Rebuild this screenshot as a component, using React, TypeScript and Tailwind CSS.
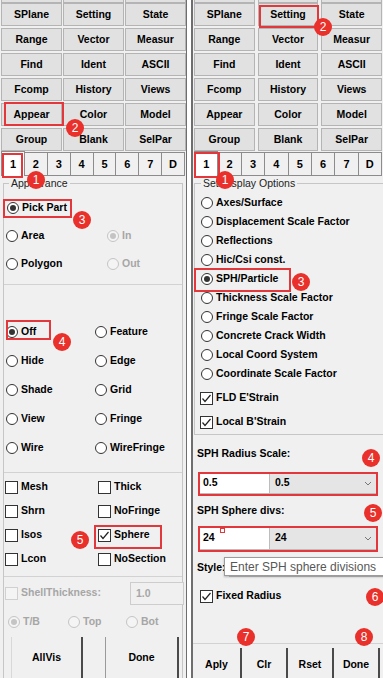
import React from 'react';

const ink = 'text-black';

const Radio: React.FC<{ checked?: boolean; disabled?: boolean; label: string; className?: string }> = ({
  checked,
  disabled,
  label,
  className = '',
}) => (
  <div className={`flex items-center gap-[3px] ${className}`}>
    <span
      className={`w-[12px] h-[12px] rounded-full border flex items-center justify-center shrink-0 ${
        disabled ? 'border-[#c4c4c4] bg-[#f4f4f4]' : 'border-[#333] bg-white'
      }`}
    >
      {checked && <span className={`w-[6px] h-[6px] rounded-full ${disabled ? 'bg-[#c4c4c4]' : 'bg-[#333]'}`} />}
    </span>
    <span className={`font-bold text-[10.5px] whitespace-nowrap ${disabled ? 'text-[#a6a6a6]' : ink}`}>{label}</span>
  </div>
);

const Check: React.FC<{ checked?: boolean; disabled?: boolean; label: string; className?: string }> = ({
  checked,
  disabled,
  label,
  className = '',
}) => (
  <div className={`flex items-center gap-[3px] ${className}`}>
    <span
      className={`w-[13px] h-[13px] border flex items-center justify-center shrink-0 ${
        disabled ? 'border-[#d0d0d0] bg-[#f4f4f4]' : 'border-[#333] bg-white'
      }`}
    >
      {checked && (
        <svg width="11" height="11" viewBox="0 0 11 11">
          <polyline points="1.5,5.5 4,8.5 9.5,2" fill="none" stroke="#222" strokeWidth="1.2" />
        </svg>
      )}
    </span>
    <span className={`font-bold text-[10.5px] whitespace-nowrap ${disabled ? 'text-[#a6a6a6]' : ink}`}>{label}</span>
  </div>
);

const GridBtn: React.FC<{ label: string }> = ({ label }) => (
  <div className="h-[23px] bg-[#e1e1e1] border border-[#b4b4b4] flex items-center justify-center font-bold text-[10.5px] text-black">
    {label}
  </div>
);

const buttonRows = [
  ['SPlane', 'Setting', 'State'],
  ['Range', 'Vector', 'Measur'],
  ['Find', 'Ident', 'ASCII'],
  ['Fcomp', 'History', 'Views'],
  ['Appear', 'Color', 'Model'],
  ['Group', 'Blank', 'SelPar'],
];

const ButtonGrid: React.FC<{ right?: boolean }> = ({ right }) => (
  <div className={right ? 'px-[1px]' : 'pl-[1px]'}>
    <div className={`grid grid-cols-3 h-[3px] ${right ? 'gap-x-[3px]' : 'gap-x-[1px]'}`}>
      <div className="bg-[#e1e1e1] border-b border-x border-[#b4b4b4]" />
      <div className="bg-[#e1e1e1] border-b border-x border-[#b4b4b4]" />
      <div className="bg-[#e1e1e1] border-b border-x border-[#b4b4b4]" />
    </div>
    <div className={`grid grid-cols-3 gap-y-[2px] ${right ? 'gap-x-[3px]' : 'gap-x-[1px]'}`}>
      {buttonRows.flat().map((b) => (
        <GridBtn key={b} label={b} />
      ))}
    </div>
  </div>
);

const Tabs: React.FC = () => (
  <div className="flex h-[24px] mt-[1px] px-[1px]">
    {['1', '2', '3', '4', '5', '6', '7', 'D'].map((t, i) => (
      <div
        key={t}
        className={`flex-1 flex items-center justify-center font-bold text-[11px] text-black border border-[#8c8c8c] ${
          i === 0 ? 'bg-white -mt-[1px] border-b-0' : 'bg-[#f0f0f0] -ml-[1px]'
        }`}
      >
        {t}
      </div>
    ))}
  </div>
);

const Badge: React.FC<{ n: string; className: string }> = ({ n, className }) => (
  <div
    className={`absolute w-[18px] h-[18px] rounded-full bg-[#e9302a] text-white text-[12px] flex items-center justify-center ${className}`}
  >
    {n}
  </div>
);

const Mark: React.FC<{ className: string }> = ({ className }) => (
  <div className={`absolute border-2 border-[#e2383c] ${className}`} />
);

const Chevron = () => (
  <svg width="8" height="5" viewBox="0 0 8 5" className="ml-auto mr-[4px]">
    <polyline points="1,1 4,4 7,1" fill="none" stroke="#777" strokeWidth="1" />
  </svg>
);

const LeftPanel: React.FC = () => (
  <div className="w-[187px] h-full bg-[#f0f0f0] border-r border-[#6e6e6e] flex flex-col">
    <ButtonGrid />
    <Tabs />
    <div className="relative mt-[7px] mx-[3px] border-t border-x border-[#c6c6c6] flex-1 flex flex-col">
      <span className="absolute -top-[8px] left-[5px] px-[2px] bg-[#f0f0f0] text-[10.5px] text-[#222]">Appearance</span>
      <div className="pt-[10px] pl-[3px]">
        <div className="h-[28px] flex items-center">
          <Radio checked label="Pick Part" />
        </div>
        <div className="h-[28px] flex items-center">
          <Radio label="Area" className="w-[101px] -ml-[1px]" />
          <Radio disabled checked label="In" />
        </div>
        <div className="h-[28px] flex items-center">
          <Radio label="Polygon" className="w-[101px] -ml-[1px]" />
          <Radio disabled label="Out" />
        </div>
      </div>
      <div className="mt-[6px] border-t border-[#d2d2d2]" />
      <div className="pt-[32px] pl-[2px]">
        {[
          ['Off', 'Feature'],
          ['Hide', 'Edge'],
          ['Shade', 'Grid'],
          ['View', 'Fringe'],
          ['Wire', 'WireFringe'],
        ].map(([a, b], i) => (
          <div key={a} className="h-[29px] flex items-center">
            <Radio checked={i === 0} label={a} className="w-[89px]" />
            <Radio label={b} />
          </div>
        ))}
      </div>
      <div className="mt-[10px] border-t border-[#d2d2d2]" />
      <div className="pt-[2px] pl-[1px]">
        {[
          ['Mesh', 'Thick'],
          ['Shrn', 'NoFringe'],
          ['Isos', 'Sphere'],
          ['Lcon', 'NoSection'],
        ].map(([a, b]) => (
          <div key={a} className="h-[24px] flex items-center">
            <Check label={a} className="w-[93px]" />
            <Check label={b} checked={b === 'Sphere'} />
          </div>
        ))}
      </div>
      <div className="mt-[5px] border-t border-[#d2d2d2]" />
      <div className="h-[32px] flex items-center pl-[1px]">
        <Check disabled label="ShellThickness:" />
        <div className="ml-auto mr-[-2px] w-[54px] h-[23px] border border-[#cdcdcd] bg-[#f0f0f0] text-[10.5px] font-bold text-[#a6a6a6] pl-[5px] pt-[3px]">
          1.0
        </div>
      </div>
      <div className="h-[26px] flex items-center pl-[4px]">
        <Radio disabled checked label="T/B" className="w-[60px]" />
        <Radio disabled label="Top" className="w-[58px]" />
        <Radio disabled label="Bot" />
      </div>
      <div className="flex mt-[2px] pl-[7px] gap-[22px] flex-1">
        <div className="w-[72px] border-l border-l-[#d8d8d8] border-r-2 border-r-[#4a4a4a] flex items-center justify-center font-bold text-[10.5px] text-black">
          AllVis
        </div>
        <div className="w-[74px] border-l border-l-[#9a9a9a] border-r-2 border-r-[#4a4a4a] flex items-center justify-center font-bold text-[10.5px] text-black">
          Done
        </div>
      </div>
    </div>
  </div>
);

const sphOptions = [
  'Axes/Surface',
  'Displacement Scale Factor',
  'Reflections',
  'Hic/Csi const.',
  'SPH/Particle',
  'Thickness Scale Factor',
  'Fringe Scale Factor',
  'Concrete Crack Width',
  'Local Coord System',
  'Coordinate Scale Factor',
];

const ValueRow: React.FC<{ v: string; h: string }> = ({ v, h }) => (
  <div className={`flex mx-[6px] ${h}`}>
    <div className="w-[71px] bg-white border border-[#bdbdbd] flex items-center pl-[3px] font-bold text-[10.5px] text-black">
      {v}
    </div>
    <div className="flex-1 bg-[#e5e5e5] border border-[#bdbdbd] border-l-0 flex items-center pl-[5px] font-bold text-[10.5px] text-black">
      {v}
      <Chevron />
    </div>
  </div>
);

const RightPanel: React.FC = () => (
  <div className="flex-1 h-full bg-[#f0f0f0] border-l-2 border-[#6e6e6e] flex flex-col">
    <ButtonGrid right />
    <Tabs />
    <div className="relative mt-[7px] ml-[1px] border-t border-l border-b border-[#c6c6c6]">
      <span className="absolute -top-[8px] left-[6px] px-[2px] bg-[#f0f0f0] text-[10.5px] text-[#222]">Set Display Options</span>
      <div className="pt-[9px] pl-[6px]">
        {sphOptions.map((o) => (
          <div key={o} className="h-[19px] flex items-center">
            <Radio checked={o === 'SPH/Particle'} label={o} />
          </div>
        ))}
      </div>
      <div className="pt-[3px] pl-[5px]">
        <div className="h-[24px] flex items-center">
          <Check checked label="FLD E'Strain" />
        </div>
        <div className="h-[24px] flex items-center">
          <Check checked label="Local B'Strain" />
        </div>
      </div>
    </div>
    <div className="mt-[9px] h-[20px] flex items-center pl-[4px] font-bold text-[10.5px] text-black">SPH Radius Scale:</div>
    <div className="mt-[8px]">
      <ValueRow v="0.5" h="h-[22px]" />
    </div>
    <div className="mt-[7px] h-[20px] flex items-center pl-[4px] font-bold text-[10.5px] text-black">SPH Sphere divs:</div>
    <div className="mt-[5px]">
      <ValueRow v="24" h="h-[24px]" />
    </div>
    <div className="mt-[8px] h-[20px] flex items-center pl-[4px]">
      <span className="font-bold text-[10.5px] text-black w-[32px]">Style:</span>
      <div className="flex-1 h-[18px] bg-[#e3e3e3] border border-[#c0c0c0]" />
    </div>
    <div className="mt-[8px] h-[20px] flex items-center pl-[7px]">
      <Check checked label="Fixed Radius" />
    </div>
    <div className="flex-1" />
    <div className="border-t border-[#d2d2d2] pt-[4px] flex h-[35px]">
      {['Aply', 'Clr', 'Rset', 'Done'].map((b, i) => (
        <div
          key={b}
          className={`border-r-2 border-[#4a4a4a] flex items-center justify-center font-bold text-[10.5px] text-black pt-[3px] ${
            i === 0 ? 'w-[49px]' : 'w-[46px]'
          }`}
        >
          {b}
        </div>
      ))}
    </div>
  </div>
);

export default function App() {
  return (
    <div className="relative w-[383px] h-[678px] overflow-hidden bg-white flex font-['Liberation_Sans',Arial,sans-serif]">
      <LeftPanel />
      <div className="w-[4px] bg-white" />
      <RightPanel />

      {/* tooltip */}
      <div className="absolute left-[224px] top-[557px] w-[170px] h-[19px] bg-white border border-[#9c9c9c] shadow-[0_1px_2px_rgba(0,0,0,0.25)] flex items-center pl-[5px] text-[12px] text-[#575757] whitespace-nowrap">
        Enter SPH sphere divisions
      </div>

      {/* annotation boxes */}
      <Mark className="left-[4px] top-[102px] w-[60px] h-[24px]" />
      <Mark className="left-[2px] top-[153px] w-[21px] h-[25px]" />
      <Mark className="left-[3px] top-[199px] w-[69px] h-[19px]" />
      <Mark className="left-[6px] top-[320px] w-[45px] h-[20px]" />
      <Mark className="left-[94px] top-[525px] w-[68px] h-[24px]" />
      <Mark className="left-[259px] top-[5px] w-[60px] h-[23px]" />
      <Mark className="left-[194px] top-[152px] w-[26px] h-[26px]" />
      <Mark className="left-[194px] top-[268px] w-[97px] h-[24px]" />
      <Mark className="left-[198px] top-[472px] w-[180px] h-[24px]" />
      <Mark className="left-[198px] top-[526px] w-[180px] h-[26px]" />
      <div className="absolute left-[220px] top-[528px] w-[5px] h-[5px] border border-[#e2383c]" />

      {/* badges */}
      <Badge n="1" className="left-[27px] top-[171px]" />
      <Badge n="2" className="left-[66px] top-[119px]" />
      <Badge n="3" className="left-[73px] top-[211px]" />
      <Badge n="4" className="left-[53px] top-[333px]" />
      <Badge n="5" className="left-[71px] top-[531px]" />
      <Badge n="1" className="left-[216px] top-[171px]" />
      <Badge n="2" className="left-[314px] top-[18px]" />
      <Badge n="3" className="left-[292px] top-[273px]" />
      <Badge n="4" className="left-[362px] top-[449px]" />
      <Badge n="5" className="left-[364px] top-[504px]" />
      <Badge n="6" className="left-[366px] top-[588px]" />
      <Badge n="7" className="left-[237px] top-[628px]" />
      <Badge n="8" className="left-[355px] top-[628px]" />
    </div>
  );
}
